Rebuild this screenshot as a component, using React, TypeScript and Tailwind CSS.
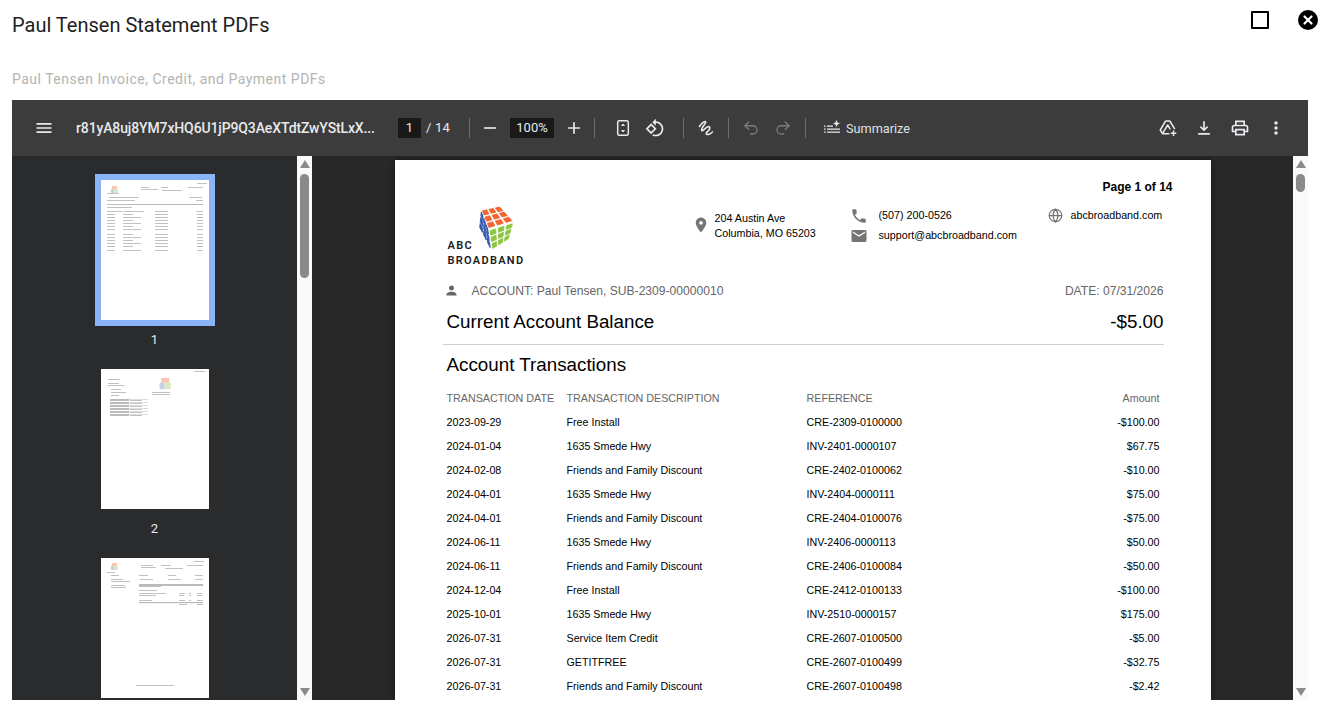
import { Globe, Redo2, Undo2 } from "lucide-react";

const rows = [
  ["2023-09-29", "Free Install", "CRE-2309-0100000", "-$100.00"],
  ["2024-01-04", "1635 Smede Hwy", "INV-2401-0000107", "$67.75"],
  ["2024-02-08", "Friends and Family Discount", "CRE-2402-0100062", "-$10.00"],
  ["2024-04-01", "1635 Smede Hwy", "INV-2404-0000111", "$75.00"],
  ["2024-04-01", "Friends and Family Discount", "CRE-2404-0100076", "-$75.00"],
  ["2024-06-11", "1635 Smede Hwy", "INV-2406-0000113", "$50.00"],
  ["2024-06-11", "Friends and Family Discount", "CRE-2406-0100084", "-$50.00"],
  ["2024-12-04", "Free Install", "CRE-2412-0100133", "-$100.00"],
  ["2025-10-01", "1635 Smede Hwy", "INV-2510-0000157", "$175.00"],
  ["2026-07-31", "Service Item Credit", "CRE-2607-0100500", "-$5.00"],
  ["2026-07-31", "GETITFREE", "CRE-2607-0100499", "-$32.75"],
  ["2026-07-31", "Friends and Family Discount", "CRE-2607-0100498", "-$2.42"],
];

type P = [number, number];

// one face of the cube, cut in 3x3 cells
function cubeCells(a: P, b: P, c: P, d: P, fill: string) {
  const at = (u: number, v: number): P => [
    a[0] * (1 - u) * (1 - v) + b[0] * u * (1 - v) + c[0] * u * v + d[0] * (1 - u) * v,
    a[1] * (1 - u) * (1 - v) + b[1] * u * (1 - v) + c[1] * u * v + d[1] * (1 - u) * v,
  ];
  const out = [];
  for (let i = 0; i < 3; i++) {
    for (let j = 0; j < 3; j++) {
      const g = 0.16;
      const pts = [at((i + g) / 3, (j + g) / 3), at((i + 1 - g) / 3, (j + g) / 3), at((i + 1 - g) / 3, (j + 1 - g) / 3), at((i + g) / 3, (j + 1 - g) / 3)];
      out.push(
        <polygon key={fill + i + j} points={pts.map((p) => p.join(",")).join(" ")} fill={fill} stroke={fill} strokeWidth="0.8" strokeLinejoin="round" />
      );
    }
  }
  return out;
}

function Ic({ d, className }: { d: string; className: string }) {
  return (
    <svg viewBox="0 0 24 24" fill="currentColor" className={className}>
      <path d={d} />
    </svg>
  );
}

function Sep() {
  return <div className="h-5 w-px shrink-0 bg-[#6e6e6e]" />;
}

function Scrollbar({ children }: { children: React.ReactNode }) {
  return (
    <div className="flex w-[15px] shrink-0 flex-col items-center bg-[#fafafa] pt-1">
      <div className="h-0 w-0 border-x-[5px] border-b-[8px] border-x-transparent border-b-[#8a8a8a]" />
      {children}
      <div className="mt-auto mb-1 h-0 w-0 border-x-[5px] border-t-[8px] border-x-transparent border-t-[#8a8a8a]" />
    </div>
  );
}

type Bar = [number, number, number, number?];

function Thumb({ bars, logoX, logoY, logoScale = 1 }: { bars: Bar[]; logoX: number; logoY: number; logoScale?: number }) {
  return (
    <svg viewBox="0 0 108 140" className="block h-[140px] w-[108px] bg-white">
      <g className="blur-[0.6px]">
        <g transform={`translate(${logoX} ${logoY}) scale(${logoScale})`} opacity="0.6">
          <rect x="2" y="0" width="5" height="3" fill="#f5a183" />
          <rect x="1" y="3" width="3" height="4" fill="#9fb0d8" />
          <rect x="4" y="3" width="4" height="4" fill="#bfdc9a" />
        </g>
        {bars.map(([x, y, w, h], i) => (
          <rect key={i} x={x} y={y} width={w} height={h ?? 0.9} fill="#777" opacity="0.5" />
        ))}
      </g>
    </svg>
  );
}

const tableBars: Bar[] = [
  [6, 31, 16], [23, 31, 20], [54, 31, 13], [95, 31, 7],
  ...[34, 37, 40, 43, 46, 49, 54, 57, 60, 63, 66, 70].flatMap((y, i): Bar[] => [
    [6, y, 8],
    [22, y, i % 2 ? 18 : 10],
    [54, y, 13],
    [96, y, 6],
  ]),
];

const thumb1: Bar[] = [
  [96, 3, 10], [40, 7, 8], [40, 9, 17], [60, 7, 7], [61, 10, 20], [87, 7, 15],
  [6, 13, 12], [8, 17, 30], [88, 17, 13], [6, 20, 28], [95, 20, 7],
  [6, 24, 96, 1], [6, 27, 25],
  ...tableBars,
];

const thumb2: Bar[] = [
  [93, 2, 11], [7, 10, 12], [7, 14, 11], [7, 16, 16], [10, 20, 10], [10, 23, 15], [10, 26, 8],
  [51, 23, 18], [51, 25, 18],
  ...[30, 33, 36, 39, 42, 45].flatMap((y): Bar[] => [[9, y, 19, 2], [28, y, 19, 0.5], [29, y + 1, 12]]),
];

const thumb3: Bar[] = [
  [93, 3, 10], [40, 7, 12], [40, 9, 15], [60, 7, 10], [64, 10, 18], [86, 7, 16], [6, 14, 8], [10, 17, 8], [10, 21, 12], [10, 23, 19],
  [10, 27, 14], [10, 29, 15], [38, 17, 9], [67, 17, 8], [94, 17, 8], [39, 21, 13], [67, 21, 13], [94, 21, 8],
  [38, 26, 64, 2], [38, 28, 22], [38, 32, 18], [38, 35, 27], [78, 35, 6], [88, 35, 2], [96, 35, 5], [38, 37, 17], [78, 37, 5], [88, 37, 2], [96, 37, 5],
  [38, 42, 13], [78, 42, 6], [88, 42, 2], [96, 42, 6], [38, 44, 64, 1.2], [78, 46, 8], [96, 46, 6], [35, 127, 38],
];

export default function App() {
  return (
    <div className="flex h-[714px] w-[1323px] flex-col overflow-hidden bg-white font-['Roboto',sans-serif]">
      <div className="flex h-[100px] shrink-0 flex-col px-3">
        <div className="flex h-[51px] items-start justify-between">
          <h1 className="mt-[12px] text-[20px] leading-[26px] text-[#212121]">Paul Tensen Statement PDFs</h1>
          <div className="mt-[10px] mr-[-7px] flex items-center gap-[29px]">
            <div className="h-[18px] w-[18px] rounded-[1px] border-2 border-black" />
            <div className="flex h-5 w-5 items-center justify-center rounded-full bg-black">
              <svg viewBox="0 0 12 12" className="h-3 w-3" stroke="white" strokeWidth="2.2" strokeLinecap="round">
                <path d="M2.5 2.5l7 7M9.5 2.5l-7 7" />
              </svg>
            </div>
          </div>
        </div>
        <p className="mt-[19px] text-sm leading-[18px] tracking-[0.5px] text-[#b4b4b4]">Paul Tensen Invoice, Credit, and Payment PDFs</p>
      </div>

      <div className="ml-3 flex h-[600px] w-[1296px] flex-col">
        {/* toolbar */}
        <div className="flex h-14 shrink-0 items-center bg-[#3c3c3c] text-[#e8eaed]">
          <Ic d="M3 18h18v-2H3v2zm0-5h18v-2H3v2zm0-7v2h18V6H3z" className="ml-[22px] h-5 w-5 shrink-0" />
          <div className="ml-[22px] w-[302px] shrink-0 text-sm font-medium tracking-[-0.13px] whitespace-nowrap">r81yA8uj8YM7xHQ6U1jP9Q3AeXTdtZwYStLxX...</div>
          <div className="ml-5 flex h-5 w-[23px] shrink-0 items-center justify-center bg-[#191919] text-[13px]">1</div>
          <div className="ml-[5px] w-[43px] shrink-0 text-[13px] tracking-[0.2px]">/ 14</div>
          <Sep />
          <Ic d="M5 11h14v2H5z" className="ml-[10px] h-5 w-5 shrink-0" />
          <div className="ml-[10px] flex h-5 w-11 shrink-0 items-center justify-center bg-[#191919] text-[13px]">100%</div>
          <Ic d="M19 13h-6v6h-2v-6H5v-2h6V5h2v6h6v2z" className="ml-[10px] h-5 w-5 shrink-0" />
          <div className="ml-[10px]"><Sep /></div>
          <svg viewBox="0 0 20 20" className="ml-[18px] h-5 w-5 shrink-0" fill="none" stroke="currentColor" strokeWidth="1.5">
            <rect x="4.7" y="2.7" width="10.6" height="14.6" rx="1.5" />
            <path d="M8.4 7.5L10 6l1.6 1.5zM8.4 12.5L10 14l1.6-1.5z" fill="currentColor" strokeWidth="0.8" />
          </svg>
          <Ic
            d="M7.34 6.41L.86 12.9l6.49 6.48 6.49-6.48-6.5-6.49zM3.69 12.9l3.66-3.66L11 12.9l-3.66 3.66-3.65-3.66zm15.67-6.26C17.61 4.88 15.3 4 13 4V.76L8.76 5 13 9.24V6c1.79 0 3.58.68 4.95 2.05 2.73 2.73 2.73 7.17 0 9.9C16.58 19.32 14.79 20 13 20c-.97 0-1.94-.21-2.84-.61l-1.49 1.49C10.02 21.62 11.51 22 13 22c2.3 0 4.61-.88 6.36-2.64 3.52-3.51 3.52-9.21 0-12.72z"
            className="ml-3 h-5 w-5 shrink-0"
          />
          <div className="ml-[18px]"><Sep /></div>
          <svg viewBox="0 0 20 20" className="ml-3 h-5 w-5 shrink-0" fill="none" stroke="currentColor" strokeWidth="1.6" strokeLinecap="round" strokeLinejoin="round">
            <path d="M3.5 8.5C5 6 8 3 9.5 3.6 11 4.4 5 10 5.6 12.2 6.2 14.4 10 8.5 12.5 8.6c2 .1 1.5 2.6 0 4-1.4 1.3-3.2 3.2-1.6 3.8 1.5.5 4-.9 5.6-2.4" />
          </svg>
          <div className="ml-3"><Sep /></div>
          <Undo2 className="ml-[13px] h-[18px] w-[18px] shrink-0 text-[#7c7c7c]" strokeWidth={1.7} />
          <Redo2 className="ml-[14px] h-[18px] w-[18px] shrink-0 text-[#7c7c7c]" strokeWidth={1.7} />
          <div className="ml-[13px]"><Sep /></div>
          <svg viewBox="0 0 18 18" className="ml-[17px] h-[18px] w-[18px] shrink-0" fill="currentColor">
            <path d="M1 6.5h1.6v1.2H1zM4 6.5h6v1.2H4zM1 9.5h1.6v1.2H1zM4 9.5h13v1.2H4zM1 12.5h1.6v1.2H1zM4 12.5h13v1.2H4z" />
            <path d="M13.5 1l1.1 2.4L17 4.5l-2.4 1.1L13.5 8l-1.1-2.4L10 4.5l2.4-1.1z" />
          </svg>
          <span className="mt-px ml-[5px] w-[64px] text-[12.7px] whitespace-nowrap text-[#dfe1e5]">Summarize</span>
          <svg viewBox="0 0 20 20" className="ml-[248px] h-5 w-5 shrink-0" fill="none" stroke="currentColor" strokeWidth="1.5" strokeLinejoin="round">
            <path d="M7.6 3h4.2l5 8.2M7.6 3L2.3 12l2.2 3.7h6.8M4.5 15.7L9.7 7l2.6 4.4" />
            <path d="M15.5 12.5v5.5M12.7 15.3h5.6" />
          </svg>
          <Ic d="M12 16l-5-5 1.4-1.45 2.6 2.6V4h2v8.15l2.6-2.6L17 11l-5 5zM5 20v-2h14v2H5z" className="ml-4 h-5 w-5 shrink-0" />
          <Ic
            d="M19 8h-1V3H6v5H5c-1.66 0-3 1.34-3 3v6h4v4h12v-4h4v-6c0-1.66-1.34-3-3-3zM8 5h8v3H8V5zm8 12v2H8v-4h8v2zm2-2v-2H6v2H4v-4c0-.55.45-1 1-1h14c.55 0 1 .45 1 1v4h-2z"
            className="ml-4 h-5 w-5 shrink-0"
          />
          <Ic
            d="M12 8c1.1 0 2-.9 2-2s-.9-2-2-2-2 .9-2 2 .9 2 2 2zm0 2c-1.1 0-2 .9-2 2s.9 2 2 2 2-.9 2-2-.9-2-2-2zm0 6c-1.1 0-2 .9-2 2s.9 2 2 2 2-.9 2-2-.9-2-2-2z"
            className="ml-4 h-5 w-5 shrink-0"
          />
        </div>

        <div className="flex min-h-0 flex-1 overflow-hidden bg-[#282828]">
          {/* sidebar */}
          <div className="flex w-[285px] shrink-0 flex-col items-center gap-[18px] overflow-hidden bg-[#2a2b2d] pt-[18px] text-[13px] text-[#e8eaed]">
            <div className="flex flex-col items-center gap-[5px]">
              <div className="border-[6px] border-[#8ab4f8]">
                <Thumb bars={thumb1} logoX={9} logoY={6} />
              </div>
              <span className="leading-[18px]">1</span>
            </div>
            <div className="mt-[2px] flex flex-col items-center gap-[11px]">
              <Thumb bars={thumb2} logoX={57} logoY={9} logoScale={1.6} />
              <span className="leading-[18px]">2</span>
            </div>
            <div className="mt-[2px]">
              <Thumb bars={thumb3} logoX={9} logoY={5} />
            </div>
          </div>
          <Scrollbar>
            <div className="mt-[6px] h-[104px] w-[9px] rounded-[5px] bg-[#8a8a8a]" />
          </Scrollbar>

          {/* page */}
          <div className="flex min-w-0 flex-1 justify-center overflow-hidden pt-1">
            <div className="h-[1056px] w-[816px] shrink-0 bg-white pt-5 pr-[47px] pl-[52px] font-['Liberation_Sans',sans-serif] text-[10.72px] text-black shadow-[0_0_6px_rgba(0,0,0,0.5)]">
              <div className="mr-[-9px] text-right text-[12px] leading-[14px] font-bold">Page 1 of 14</div>
              <div className="mt-[3px] flex h-[81px] items-start">
                <div className="relative h-[81px] w-[245px] shrink-0">
                  <svg viewBox="0 0 80 50" className="absolute top-2 left-[27px] h-[50px] w-[80px]">
                    {cubeCells([7, 5], [26, 1], [40, 16], [14, 24], "#f26430")}
                    {cubeCells([7, 5], [14, 24], [17, 45], [5, 22], "#2f52a8")}
                    {cubeCells([14.5, 25], [40, 17.5], [35, 34], [18, 45], "#8cc63f")}
                  </svg>
                  <div className="absolute top-[41px] left-px font-['Roboto',sans-serif] text-[11px] leading-[15px] font-semibold tracking-[1.3px] text-[#1a1a1a]">
                    ABC
                    <br />
                    BROADBAND
                  </div>
                </div>
                <div className="mt-[14px] flex w-[158px] shrink-0 items-start">
                  <Ic d="M12 2C8.13 2 5 5.13 5 9c0 5.25 7 13 7 13s7-7.75 7-13c0-3.87-3.13-7-7-7zm0 9.5c-1.38 0-2.5-1.12-2.5-2.5s1.12-2.5 2.5-2.5 2.5 1.12 2.5 2.5-1.12 2.5-2.5 2.5z" className="mt-[5px] h-[18px] w-[18px] shrink-0 text-[#757575]" />
                  <div className="ml-[5px] leading-[15px]">
                    204 Austin Ave
                    <br />
                    Columbia, MO 65203
                  </div>
                </div>
                <div className="mt-[11px] flex w-[198px] shrink-0 flex-col gap-[5px]">
                  <div className="flex h-[15px] items-center">
                    <Ic d="M6.62 10.79c1.44 2.83 3.76 5.14 6.59 6.59l2.2-2.2c.27-.27.67-.36 1.02-.24 1.12.37 2.33.57 3.57.57.55 0 1 .45 1 1V20c0 .55-.45 1-1 1-9.39 0-17-7.61-17-17 0-.55.45-1 1-1h3.5c.55 0 1 .45 1 1 0 1.25.2 2.45.57 3.57.11.35.03.74-.25 1.02l-2.2 2.2z" className="h-[18px] w-[18px] shrink-0 text-[#757575]" />
                    <span className="ml-[11px]">(507) 200-0526</span>
                  </div>
                  <div className="flex h-[15px] items-center">
                    <Ic d="M20 4H4c-1.1 0-1.99.9-1.99 2L2 18c0 1.1.9 2 2 2h16c1.1 0 2-.9 2-2V6c0-1.1-.9-2-2-2zm0 4l-8 5-8-5V6l8 5 8-5v2z" className="h-[18px] w-[18px] shrink-0 text-[#757575]" />
                    <span className="ml-[11px]">support@abcbroadband.com</span>
                  </div>
                </div>
                <div className="mt-[11px] flex h-[15px] items-center">
                  <Globe className="h-[15px] w-[15px] shrink-0 text-[#757575]" strokeWidth={2} />
                  <span className="ml-2">abcbroadband.com</span>
                </div>
              </div>

              <div className="mt-[5px] flex items-center justify-between text-[12.1px] leading-[16px] text-[#666]">
                <div className="flex items-center">
                  <Ic d="M12 12c2.21 0 4-1.79 4-4s-1.79-4-4-4-4 1.79-4 4 1.79 4 4 4zm0 2c-2.67 0-8 1.34-8 4v2h16v-2c0-2.66-5.33-4-8-4z" className="mt-[-2px] ml-[-3px] h-[15px] w-[15px] shrink-0" />
                  <span className="ml-[13px]">ACCOUNT: Paul Tensen, SUB-2309-00000010</span>
                </div>
                <span>DATE: 07/31/2026</span>
              </div>
              <div className="mt-3 flex items-center justify-between text-[18.8px] leading-[22px]">
                <span>Current Account Balance</span>
                <span>-$5.00</span>
              </div>
              <div className="mt-[11px] ml-[-4px] h-px bg-[#cfcfcf]" />
              <h2 className="mt-[9px] text-[18.8px] leading-[22px] font-normal">Account Transactions</h2>
              <div className="mt-[10px] grid grid-cols-[120px_240px_1fr_auto] pr-1 leading-[24px]">
                <div className="text-[#666]">TRANSACTION DATE</div>
                <div className="text-[#666]">TRANSACTION DESCRIPTION</div>
                <div className="text-[#666]">REFERENCE</div>
                <div className="text-right text-[#666]">Amount</div>
                {rows.map((r) => (
                  <div key={r[2]} className="contents">
                    <div>{r[0]}</div>
                    <div>{r[1]}</div>
                    <div>{r[2]}</div>
                    <div className="text-right">{r[3]}</div>
                  </div>
                ))}
              </div>
            </div>
          </div>
          <Scrollbar>
            <div className="mt-[6px] h-[18px] w-[9px] rounded-[5px] bg-[#8a8a8a]" />
          </Scrollbar>
        </div>
      </div>
    </div>
  );
}
